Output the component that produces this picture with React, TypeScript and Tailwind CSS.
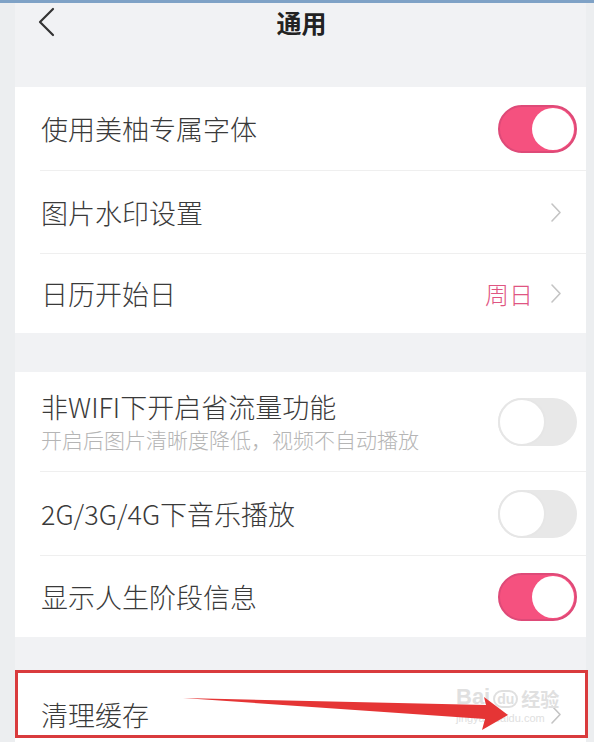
import React from 'react';

const font = { fontFamily: '"Noto Sans CJK SC", "Noto Sans", sans-serif' };

const Toggle: React.FC<{ on: boolean }> = ({ on }) =>
  on ? (
    <div className="w-[79px] h-[48px] rounded-full bg-[#f5517f] border-2 border-[#de4a78] flex items-center justify-end p-[1px]">
      <div className="w-[42px] h-[42px] rounded-full bg-white" />
    </div>
  ) : (
    <div className="w-[79px] h-[48px] rounded-full bg-[#e8e8e8] flex items-center justify-start">
      <div className="w-[48px] h-[48px] rounded-full bg-white border-2 border-[#e6e6e6]" />
    </div>
  );

const Chevron: React.FC<{ className?: string }> = ({ className }) => (
  <svg width="12" height="21" viewBox="0 0 12 21" className={className}>
    <path d="M2 2 L10 10.5 L2 19" fill="none" stroke="#c4c4c4" strokeWidth="1.6" strokeLinecap="round" strokeLinejoin="round" />
  </svg>
);

const Divider = () => <div className="ml-[25px] h-px bg-[#efefef]" />;

const Row: React.FC<{ label: string; h: string; children?: React.ReactNode }> = ({ label, h, children }) => (
  <div className={`flex items-center justify-between pl-[26px] ${h}`}>
    <span className="text-[27px] leading-none font-light text-[#3a3a3a]">{label}</span>
    {children}
  </div>
);

export default function App() {
  return (
    <div className="w-[594px] h-[742px] overflow-hidden bg-[#eceef0] relative" style={font}>
      <div className="h-[3px] bg-[#7fa2c6]" />
      <div className="ml-[15px] w-[571px] bg-[#f1f2f4] h-[739px]">
        {/* header */}
        <div className="relative h-[84px]">
          <svg width="19" height="30" viewBox="0 0 19 30" className="absolute left-[22px] top-[4px]">
            <path d="M16 2 L3 15 L16 28" fill="none" stroke="#333" strokeWidth="2.2" strokeLinecap="round" strokeLinejoin="round" />
          </svg>
          <div className="text-center text-[25px] font-semibold text-[#222] leading-[38px] pl-[2px]">通用</div>
        </div>

        {/* card 1 */}
        <div className="bg-white">
          <Row label="使用美柚专属字体" h="h-[83px] pr-[9px]">
            <Toggle on />
          </Row>
          <Divider />
          <Row label="图片水印设置" h="h-[82px] pr-[24px]">
            <Chevron />
          </Row>
          <Divider />
          <Row label="日历开始日" h="h-[79px] pr-[24px]">
            <div className="flex items-center gap-[17px]">
              <span className="text-[24px] leading-none font-light text-[#df5582]">周日</span>
              <Chevron />
            </div>
          </Row>
        </div>

        <div className="h-[39px]" />

        {/* card 2 */}
        <div className="bg-white">
          <div className="flex items-center justify-between pl-[26px] pr-[9px] h-[99px]">
            <div className="flex flex-col">
              <span className="text-[27px] leading-[32px] font-light text-[#3a3a3a]">非WIFI下开启省流量功能</span>
              <span className="text-[21px] leading-[28px] font-light text-[#b5b5b5] mt-[2px]">开启后图片清晰度降低，视频不自动播放</span>
            </div>
            <Toggle on={false} />
          </div>
          <Divider />
          <Row label="2G/3G/4G下音乐播放" h="h-[83px] pr-[9px]">
            <Toggle on={false} />
          </Row>
          <Divider />
          <Row label="显示人生阶段信息" h="h-[81px] pr-[9px]">
            <Toggle on />
          </Row>
        </div>

        <div className="h-[33px]" />

        {/* card 3 */}
        <div className="bg-white">
          <Row label="清理缓存" h="h-[88px] pr-[24px]">
            <Chevron />
          </Row>
        </div>
      </div>

      {/* annotation: red frame */}
      <div className="absolute left-[15px] top-[670px] w-[573px] h-[68px] border-[3px] border-[#d93b3d]" />

      {/* watermark */}
      <div className="absolute left-[456px] top-[686px] flex flex-col items-start text-[#e0e0e0]" style={{ fontFamily: '"Liberation Sans", sans-serif' }}>
        <div className="flex items-end gap-[3px]">
          <span className="text-[22px] font-bold leading-none">Bai</span>
          <span className="text-[14px] font-bold leading-none rounded-full border-2 border-[#e0e0e0] px-[2px]">du</span>
          <span className="text-[19px] font-bold leading-none" style={font}>经验</span>
        </div>
        <span className="text-[11px] leading-none mt-[5px]">jingyan.baidu.com</span>
      </div>

      {/* annotation: red arrow */}
      <svg width="594" height="742" className="absolute left-0 top-0 pointer-events-none">
        <polygon points="183,698 486,705 484,697 508,715 482,730 485,719" fill="#e53535" />
      </svg>
    </div>
  );
}
